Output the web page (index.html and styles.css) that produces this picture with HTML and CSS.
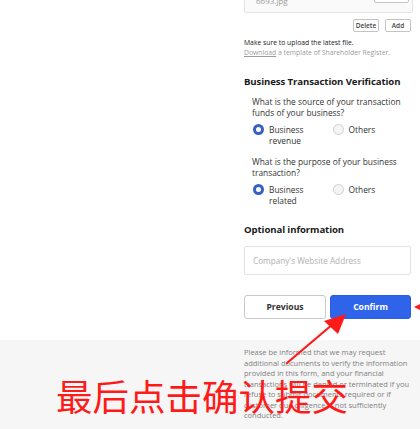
FILE: index.html
```html
<!DOCTYPE html>
<html lang="en">

<head>
    <meta charset="UTF-8">
    <meta name="viewport" content="width=device-width, initial-scale=1.0">
    <title>Business Verification</title>
    <link rel="stylesheet" href="styles.css">
</head>

<body>
    <div class="page">
        <div class="top">
            <div class="blank"></div>
            <div class="panel">
                <div class="file-box">
                    <span class="file-name">6693.jpg</span>
                    <button class="btn-small">Delete</button>
                </div>
                <div class="file-actions">
                    <button class="btn-small">Delete</button>
                    <button class="btn-small">Add</button>
                </div>
                <p class="note">Make sure to upload the latest file.</p>
                <p class="note muted"><u>Download</u> a template of Shareholder Register.</p>

                <h3>Business Transaction Verification</h3>

                <div class="question">
                    <p>What is the source of your transaction<br>funds of your business?</p>
                    <div class="options">
                        <label class="option"><span class="radio checked"></span><span>Business<br>revenue</span></label>
                        <label class="option"><span class="radio"></span><span>Others</span></label>
                    </div>
                </div>

                <div class="question">
                    <p>What is the purpose of your business<br>transaction?</p>
                    <div class="options">
                        <label class="option"><span class="radio checked"></span><span>Business<br>related</span></label>
                        <label class="option"><span class="radio"></span><span>Others</span></label>
                    </div>
                </div>

                <h3 class="optional">Optional information</h3>
                <input class="field" type="text" placeholder="Company's Website Address">

                <div class="actions">
                    <button class="btn btn-prev">Previous</button>
                    <button class="btn btn-confirm">Confirm</button>
                </div>
            </div>
        </div>

        <div class="footer">
            <p>Please be informed that we may request<br>
                additional documents to verify the information<br>
                provided in this form, and your financial<br>
                transactions will be denied or terminated if you<br>
                refuse to submit documents required or if<br>
                customer due diligence is not sufficiently<br>
                conducted.</p>
            <p class="inquiry">For inquiries on our customer due diligence</p>
        </div>

        <!-- annotation layer -->
        <div class="hint">最后点击确认提交</div>
        <svg class="arrow" width="420" height="429" viewBox="0 0 420 429">
            <path d="M287 363 L333 324" stroke="#ff1a1a" stroke-width="2.2" stroke-linecap="round" fill="none"/>
            <polygon points="346,314 324,321 338,334" fill="#ff1a1a"/>
            <polygon points="414,307 420,304 420,310" fill="#ff1a1a"/>
        </svg>
    </div>
</body>

</html>
```

FILE: styles.css
```css
* {
    box-sizing: border-box;
}

body {
    margin: 0;
    background: #fff;
    font-family: "Open Sans", "Noto Sans", sans-serif;
    color: #333;
}

.page {
    position: relative;
    width: 420px;
    height: 429px;
    overflow: hidden;
}

.top {
    display: flex;
    height: 340px;
}

.blank {
    width: 237px;
}

.panel {
    width: 183px;
    padding: 0 9px 0 7px;
}

p {
    margin: 0;
}

.file-box {
    display: flex;
    align-items: flex-end;
    justify-content: space-between;
    height: 33px;
    margin-top: -20px;
    margin-right: -2px;
    padding: 0 3px 9px 11px;
    border: 1px solid #e3e3e3;
    border-radius: 2px;
    background: #fafafa;
}

.file-name {
    font-size: 8px;
    color: #9a9a9a;
    line-height: 10px;
    margin-bottom: -3px;
}

.btn-small {
    height: 13px;
    padding: 0 5px;
    border: 1px solid #c4c4c4;
    border-radius: 2px;
    background: #fff;
    font-family: "Open Sans", sans-serif;
    font-size: 6.5px;
    font-weight: 600;
    color: #444;
    cursor: pointer;
}

.file-box .btn-small {
    width: 35px;
}

.file-actions {
    display: flex;
    justify-content: flex-end;
    gap: 6px;
    margin-top: 6px;
}

.file-actions .btn-small {
    width: 26px;
    padding: 0;
}

.note {
    font-size: 6.8px;
    line-height: 9.5px;
    color: #222;
}

.file-actions + .note {
    margin-top: 6px;
}

.muted {
    color: #9c9c9c;
}

h3 {
    margin: 18px 0 0;
    font-size: 9.6px;
    line-height: 14px;
    font-weight: 700;
    color: #1a1a1a;
    letter-spacing: -0.1px;
}

.question {
    padding-left: 8px;
    margin-top: 7px;
    font-size: 8.4px;
    line-height: 11px;
    color: #333;
}

.question + .question {
    margin-top: 10px;
}

.options {
    display: flex;
    margin-top: 6px;
}

.option {
    display: flex;
    align-items: flex-start;
    gap: 5px;
    width: 83px;
    padding-left: 1px;
}

.radio {
    flex: none;
    width: 11px;
    height: 11px;
    border: 1px solid #d0d0d0;
    border-radius: 50%;
    background: #f4f4f4;
}

.radio.checked {
    border: 3px solid #3560c4;
    background: #fff;
}

.optional {
    margin-top: 17px;
}

.field {
    display: block;
    width: 167px;
    height: 29px;
    margin-top: 9px;
    padding: 0 8px;
    border: 1px solid #e2e2e2;
    border-radius: 2px;
    font-family: "Open Sans", sans-serif;
    font-size: 8.2px;
    color: #333;
}

.field::placeholder {
    color: #b0b0b0;
}

.actions {
    display: flex;
    gap: 4px;
    margin-top: 20px;
}

.btn {
    height: 24px;
    width: 82px;
    border-radius: 3px;
    font-family: "Open Sans", sans-serif;
    font-size: 8.6px;
    font-weight: 700;
    cursor: pointer;
}

.btn-prev {
    border: 1px solid #c9c9c9;
    background: #fff;
    color: #333;
}

.btn-confirm {
    width: 81px;
    border: 1px solid #2a5ee0;
    background: #2f64ea;
    color: #fff;
}

.footer {
    height: 89px;
    padding: 7px 0 0 244px;
    background: #f6f6f6;
    font-size: 7.5px;
    line-height: 10.5px;
    color: #808080;
    white-space: nowrap;
}

.inquiry {
    margin-top: 6px;
    color: #444;
}

.hint {
    position: absolute;
    left: 56px;
    top: 371px;
    font-family: "Noto Sans CJK SC", sans-serif;
    font-size: 36.5px;
    line-height: 50px;
    color: #ff1a1a;
    white-space: nowrap;
}

.arrow {
    position: absolute;
    left: 0;
    top: 0;
    pointer-events: none;
}
```
